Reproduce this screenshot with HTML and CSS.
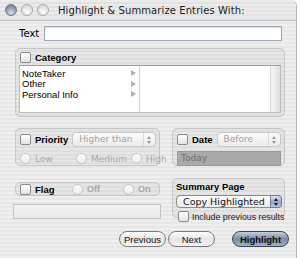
FILE: index.html
```html
<!DOCTYPE html>
<html lang="en">
  <head>
    <meta charset="UTF-8" />
    <title>Highlight &amp; Summarize Entries With:</title>
    <link rel="stylesheet" href="styles.css">
  </head>
  <body>
    <div class="window">
      <div class="titlebar">
        <div class="lights">
          <span class="light close"></span>
          <span class="light"></span>
          <span class="light"></span>
        </div>
        <div class="title">Highlight &amp; Summarize Entries With:</div>
      </div>

      <div class="content">
        <div class="text-row">
          <label class="text-label">Text</label>
          <div class="field"></div>
        </div>

        <div class="group category">
          <div class="group-head">
            <span class="check"></span>
            <span class="bold">Category</span>
          </div>
          <div class="browser">
            <ul class="column">
              <li>NoteTaker <span class="arrow"></span></li>
              <li>Other <span class="arrow"></span></li>
              <li>Personal Info <span class="arrow"></span></li>
            </ul>
            <div class="column second"></div>
            <div class="track"></div>
          </div>
        </div>

        <div class="pair">
          <div class="group small priority">
            <div class="line">
              <span class="check"></span>
              <span class="bold">Priority</span>
              <div class="popup wide">Higher than<span class="stepper"></span></div>
            </div>
            <div class="line radios">
              <span class="radio-item"><span class="radio"></span>Low</span>
              <span class="radio-item"><span class="radio"></span>Medium</span>
              <span class="radio-item"><span class="radio"></span>High</span>
            </div>
          </div>
          <div class="group small date">
            <div class="line">
              <span class="check"></span>
              <span class="bold">Date</span>
              <div class="popup">Before<span class="stepper"></span></div>
            </div>
            <div class="today">Today</div>
          </div>
        </div>

        <div class="pair lower">
          <div class="left-col">
            <div class="group flag">
              <span class="lead"><span class="check"></span><span class="bold">Flag</span></span>
              <span class="radio-item"><span class="radio"></span><b>Off</b></span>
              <span class="radio-item"><span class="radio"></span><b>On</b></span>
            </div>
            <div class="field empty"></div>
          </div>
          <div class="group small summary">
            <div class="bold">Summary Page</div>
            <div class="popup active">Copy Highlighted<span class="cap"></span></div>
            <div class="include">
              <span class="check"></span>
              Include previous results
            </div>
          </div>
        </div>

        <div class="buttons">
          <button class="btn">Previous</button>
          <button class="btn">Next</button>
          <button class="btn default">Highlight</button>
        </div>
      </div>
    </div>
  </body>
</html>
```

FILE: styles.css
```css
body {
  margin: 0;
  background: #ffffff;
  font-family: "Liberation Sans", Arial, sans-serif;
  font-size: 10px;
  color: #000;
}

.window {
  width: 296px;
  height: 258px;
  border-right: 1px solid #b4b4b4;
  border-radius: 0 6px 0 0;
  overflow: hidden;
  background: repeating-linear-gradient(#efefef 0 2px, #e7e7e7 2px 4px);
}

/* title bar */
.titlebar {
  height: 20px;
  display: flex;
  align-items: center;
  border-bottom: 1px solid #bdbdbd;
  background: repeating-linear-gradient(#ececec 0 2px, #e2e2e2 2px 4px);
}
.lights {
  display: flex;
  gap: 4px;
  margin-left: 5px;
}
.light {
  width: 10px;
  height: 10px;
  border-radius: 50%;
  border: 1px solid #a8a8a8;
  background: radial-gradient(circle at 50% 70%, #fafafa, #d4d4d4);
}
.light.close {
  border-color: #6e7784;
  background: radial-gradient(circle at 50% 75%, #d8e0ea, #8a96a6 60%, #6c7686);
}
.title {
  margin-left: 9px;
  font-family: "DejaVu Sans", sans-serif;
  font-size: 10px;
  color: #1a1a1a;
  letter-spacing: 0.1px;
}

.content {
  padding: 5px 0 0 0;
}

/* text row */
.text-row {
  display: flex;
  align-items: center;
  height: 15px;
}
.text-label {
  font-family: "DejaVu Sans", sans-serif;
  font-size: 10px;
  margin-left: 19px;
  width: 25px;
}
.field {
  width: 236px;
  height: 13px;
  background: #fff;
  border: 1px solid #9aa8b8;
  box-shadow: inset 0 1px 1px rgba(0, 0, 0, 0.15);
}

/* group boxes */
.group {
  border: 1px solid #c6c6c6;
  border-radius: 5px;
  background: rgba(0, 0, 0, 0.035);
  box-sizing: border-box;
}
.bold {
  font-weight: bold;
  font-size: 9.5px;
}
.check {
  display: inline-block;
  width: 9px;
  height: 9px;
  border: 1px solid #8a8a8a;
  border-radius: 2px;
  background: linear-gradient(#ffffff, #e4e4e4);
  flex: none;
}

.category {
  margin: 7px 0 0 15px;
  width: 270px;
  height: 69px;
  padding: 0 3px;
}
.group-head {
  display: flex;
  align-items: center;
  gap: 4px;
  height: 16px;
  padding-left: 1px;
}
.browser {
  display: flex;
  height: 46px;
  background: #fff;
  border: 1px solid #bcbcbc;
  border-top-color: #9c9c9c;
}
.column {
  list-style: none;
  margin: 0;
  padding: 2px 0 0 2px;
  width: 117px;
  border-right: 1px solid #d0d0d0;
}
.column li {
  display: flex;
  justify-content: space-between;
  align-items: center;
  height: 10.5px;
  font-size: 9.5px;
  padding-right: 3px;
}
.arrow {
  width: 0;
  height: 0;
  border-left: 5px solid #b0b0b0;
  border-top: 3px solid transparent;
  border-bottom: 3px solid transparent;
}
.column.second {
  width: 128px;
  border-right: none;
}
.track {
  flex: 1;
  background: linear-gradient(90deg, #f6f6f6, #dedede);
  border-left: 1px solid #d8d8d8;
}

/* priority / date */
.pair {
  display: flex;
  margin: 11px 0 0 15px;
  gap: 12px;
  align-items: flex-start;
}
.small {
  padding: 3px 3px 0 4px;
}
.priority {
  width: 145px;
  height: 38px;
}
.date {
  width: 113px;
  height: 38px;
}
.line {
  display: flex;
  align-items: center;
  gap: 4px;
  height: 15px;
}
.popup {
  position: relative;
  margin-left: auto;
  height: 13px;
  line-height: 13px;
  border: 1px solid #c8c8c8;
  border-radius: 4px;
  background: linear-gradient(#fbfbfb, #ececec);
  font-family: "DejaVu Sans", sans-serif;
  font-size: 9px;
  color: #a0a0a0;
  padding-left: 6px;
  box-sizing: content-box;
}
.popup.wide {
  width: 79px;
}
.date .popup {
  width: 61px;
}
.stepper {
  position: absolute;
  right: 0;
  top: 0;
  width: 11px;
  height: 13px;
  border-left: 1px solid #d8d8d8;
}
.stepper::before,
.stepper::after {
  content: "";
  position: absolute;
  left: 3px;
  border-left: 2.5px solid transparent;
  border-right: 2.5px solid transparent;
}
.stepper::before {
  top: 3px;
  border-bottom: 3px solid #9a9a9a;
}
.stepper::after {
  top: 8px;
  border-top: 3px solid #9a9a9a;
}
.radios {
  display: grid;
  grid-template-columns: 52px 51px auto;
  margin-top: 4px;
}
.radio-item {
  display: flex;
  align-items: center;
  gap: 4px;
  font-family: "DejaVu Sans", sans-serif;
  font-size: 9px;
  color: #a8a8a8;
}
.radio {
  display: inline-block;
  width: 9px;
  height: 9px;
  border: 1px solid #c4c4c4;
  border-radius: 50%;
  background: linear-gradient(#fdfdfd, #ececec);
  flex: none;
}
.today {
  margin-top: 4px;
  height: 13px;
  line-height: 13px;
  background: #a9a9a9;
  border: 1px solid #9a9a9a;
  font-family: "DejaVu Sans", sans-serif;
  font-size: 9px;
  color: #6e6e6e;
  padding-left: 3px;
}

/* flag / summary */
.pair.lower {
  margin-top: 12px;
}
.left-col {
  width: 145px;
}
.flag {
  display: grid;
  grid-template-columns: 52px 51px auto;
  align-items: center;
  height: 14px;
  margin-top: 4px;
  padding-left: 4px;
}
.lead {
  display: flex;
  align-items: center;
  gap: 4px;
}
.flag .radio-item b {
  font-family: "Liberation Sans", Arial, sans-serif;
  font-size: 9px;
}
.field.empty {
  width: 146px;
  height: 13px;
  margin: 8px 0 0 -2px;
  background: linear-gradient(#f2f2f2, #e8e8e8);
  border-color: #c4c4c4;
  box-shadow: none;
}
.summary {
  width: 113px;
  height: 40px;
  padding: 2px 2px 0 3px;
}
.summary .bold {
  height: 12px;
  line-height: 12px;
}
.popup.active {
  margin: 2px 0 0 0;
  height: 11px;
  line-height: 11px;
  color: #111;
  border-color: #8c8c8c;
  font-size: 9.5px;
  padding-left: 6px;
}
.cap {
  position: absolute;
  right: -1px;
  top: -1px;
  width: 12px;
  height: 13px;
  border-radius: 0 4px 4px 0;
  border: 1px solid #6d7f98;
  box-sizing: border-box;
  background: linear-gradient(#dfe8f4, #8fa8c8 55%, #b8cce4);
}
.cap::before,
.cap::after {
  content: "";
  position: absolute;
  left: 3px;
  border-left: 2.5px solid transparent;
  border-right: 2.5px solid transparent;
}
.cap::before {
  top: 2px;
  border-bottom: 3px solid #1a1a1a;
}
.cap::after {
  top: 7px;
  border-top: 3px solid #1a1a1a;
}
.include {
  display: flex;
  align-items: center;
  gap: 3px;
  margin: 3px 0 0 2px;
  font-family: "Liberation Sans", Arial, sans-serif;
  font-size: 8.8px;
  white-space: nowrap;
  color: #222;
}

/* buttons */
.buttons {
  display: flex;
  margin: 12px 0 0 119px;
  gap: 2px;
}
.btn {
  height: 16px;
  width: 47px;
  padding: 0;
  border: 1px solid #7a7a7a;
  border-radius: 8px;
  background: linear-gradient(#ffffff, #e6e6e6 50%, #f4f4f4);
  font-family: "Liberation Sans", Arial, sans-serif;
  font-size: 9.5px;
  color: #111;
}
.btn.default {
  width: 57px;
  margin-left: 15px;
  font-weight: bold;
  border-color: #3c4656;
  background: linear-gradient(#c4cedc, #7c8ca4 50%, #9fb0c6);
}
```
